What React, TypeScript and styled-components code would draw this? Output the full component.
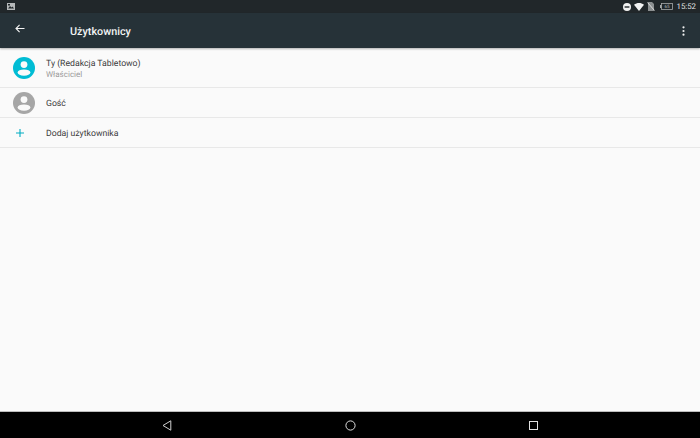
import * as React from 'react'
import styled, {createGlobalStyle} from 'styled-components'

const Global = createGlobalStyle`
  html, body { margin: 0; padding: 0; }
  body {
    font-family: Roboto, "Liberation Sans", sans-serif;
    overflow: hidden;
    text-rendering: geometricPrecision;
  }
`

const Screen = styled.div`
  width: 700px;
  height: 438px;
  display: flex;
  flex-direction: column;
  background: #fafafa;
`

const StatusBar = styled.div`
  height: 13px;
  background: #21272a;
  display: flex;
  align-items: center;
  justify-content: space-between;
  padding: 0 4px 0 7px;
  color: #e8eaea;
  flex: none;
`

const StatusRight = styled.div`
  display: flex;
  align-items: center;
  gap: 3px;
`

const Battery = styled.svg`
  margin-left: 2px;
  margin-right: 1px;
`

const Clock = styled.span`
  font-size: 7.8px;
  font-weight: 400;
  color: #e6e8e8;
`

const AppBar = styled.div`
  height: 35px;
  background: #263238;
  display: flex;
  align-items: center;
  flex: none;
  padding: 0 15px 0 15px;
  box-shadow: 0 1px 2px rgba(0, 0, 0, 0.3);
  z-index: 1;
`

const BackSlot = styled.div`
  width: 55px;
  height: 100%;
  display: flex;
  align-items: flex-start;
  padding-top: 11px;
  box-sizing: border-box;
`

const Title = styled.h1`
  margin: 0;
  flex: 1;
  font-size: 10.8px;
  font-weight: 500;
  color: #f2f4f4;
  padding-top: 1px;
`

const List = styled.div`
  display: flex;
  flex-direction: column;
  flex: 1;
`

const Row = styled.div<{$h: number}>`
  height: ${p => p.$h}px;
  display: flex;
  align-items: center;
  border-bottom: 1px solid #e8e8e8;
  box-sizing: border-box;
`

const IconSlot = styled.div<{$pull?: number}>`
  width: 46px;
  display: flex;
  justify-content: center;
  padding-left: 2px;
  padding-right: ${p => p.$pull ?? 0}px;
  box-sizing: border-box;
  flex: none;
`

const RowText = styled.div`
  display: flex;
  flex-direction: column;
  padding-top: 4px;
`

const RowTitle = styled.span`
  font-size: 8.7px;
  line-height: 11px;
  color: #3c3c3c;
`

const RowSub = styled.span`
  font-size: 8px;
  line-height: 10px;
  color: #9a9a9a;
`

const NavBar = styled.div`
  height: 26px;
  background: #000;
  border-top: 1px solid #bdbdbd;
  box-sizing: content-box;
  display: flex;
  align-items: center;
  justify-content: center;
  gap: 173px;
  flex: none;
  margin-top: -1px;
`

function Avatar(props: {color: string}) {
  return (
    <svg width="22" height="22" viewBox="0 0 22 22">
      <circle cx="11" cy="11" r="11" fill={props.color} />
      <circle cx="11" cy="7.6" r="3.4" fill="#fafafa" />
      <ellipse cx="11" cy="15.6" rx="6.4" ry="3.2" fill="#fafafa" />
    </svg>
  )
}

export default function App() {
  return (
    <Screen>
      <Global />
      <StatusBar>
        <svg width="8" height="7" viewBox="0 0 8 7">
          <rect width="8" height="7" fill="#b5b8b9" />
          <path d="M1 5.5 L3 3 L4.5 4.5 L5.5 3.5 L7 5.5 Z" fill="#21272a" />
          <rect x="1" y="1" width="2" height="1.5" fill="#21272a" />
        </svg>
        <StatusRight>
          <svg width="8" height="8" viewBox="0 0 8 8">
            <circle cx="4" cy="4" r="4" fill="#f2f2f2" />
            <rect x="1.6" y="3.3" width="4.8" height="1.4" fill="#21272a" />
          </svg>
          <svg width="10" height="8" viewBox="0 0 10 8">
            <path d="M0 1.8 C3 -0.6 7 -0.6 10 1.8 L5 8 Z" fill="#f2f2f2" />
          </svg>
          <svg width="8" height="9" viewBox="0 0 8 9">
            <path d="M1 0 H5 L7 2 V9 H1 Z" fill="#8b8f90" />
            <path d="M0.5 0.5 L7.5 8.5" stroke="#e4e4e4" strokeWidth="0.9" />
          </svg>
          <Battery width="13" height="7" viewBox="0 0 13 7">
            <rect x="1.5" y="0.5" width="11" height="6" fill="none" stroke="#a6a9aa" strokeWidth="0.8" />
            <rect x="0" y="2" width="1.4" height="3" fill="#a6a9aa" />
            <text x="7" y="5.4" fontSize="4.6" fill="#b4b7b8" textAnchor="middle" fontFamily="Roboto">65</text>
          </Battery>
          <Clock>15:52</Clock>
        </StatusRight>
      </StatusBar>
      <AppBar>
        <BackSlot>
          <svg width="10" height="9" viewBox="0 0 10 9">
            <path d="M9.5 4.5 H1 M4.6 0.8 L1 4.5 L4.6 8.2" stroke="#f4f4f4" strokeWidth="1.1" fill="none" />
          </svg>
        </BackSlot>
        <Title>Użytkownicy</Title>
        <svg width="3" height="10" viewBox="0 0 3 10">
          <circle cx="1.5" cy="1.3" r="1.1" fill="#f0f0f0" />
          <circle cx="1.5" cy="5" r="1.1" fill="#f0f0f0" />
          <circle cx="1.5" cy="8.7" r="1.1" fill="#f0f0f0" />
        </svg>
      </AppBar>
      <List>
        <Row $h={40}>
          <IconSlot><Avatar color="#00bcd4" /></IconSlot>
          <RowText>
            <RowTitle>Ty (Redakcja Tabletowo)</RowTitle>
            <RowSub>Właściciel</RowSub>
          </RowText>
        </Row>
        <Row $h={30}>
          <IconSlot><Avatar color="#a6a6a6" /></IconSlot>
          <RowText><RowTitle>Gość</RowTitle></RowText>
        </Row>
        <Row $h={30}>
          <IconSlot $pull={8}>
            <svg width="8" height="8" viewBox="0 0 8 8">
              <path d="M4 0 V8 M0 4 H8" stroke="#00acc1" strokeWidth="1.1" />
            </svg>
          </IconSlot>
          <RowText><RowTitle>Dodaj użytkownika</RowTitle></RowText>
        </Row>
      </List>
      <NavBar>
        <svg width="10" height="11" viewBox="0 0 10 11">
          <path d="M8.8 0.8 V10.2 L1 5.5 Z" fill="none" stroke="#d0d0d0" strokeWidth="1" />
        </svg>
        <svg width="11" height="11" viewBox="0 0 11 11">
          <circle cx="5.5" cy="5.5" r="4.6" fill="none" stroke="#e0e0e0" strokeWidth="1" />
        </svg>
        <svg width="9" height="9" viewBox="0 0 9 9">
          <rect x="0.5" y="0.5" width="8" height="8" fill="none" stroke="#e0e0e0" strokeWidth="1" />
        </svg>
      </NavBar>
    </Screen>
  )
}
